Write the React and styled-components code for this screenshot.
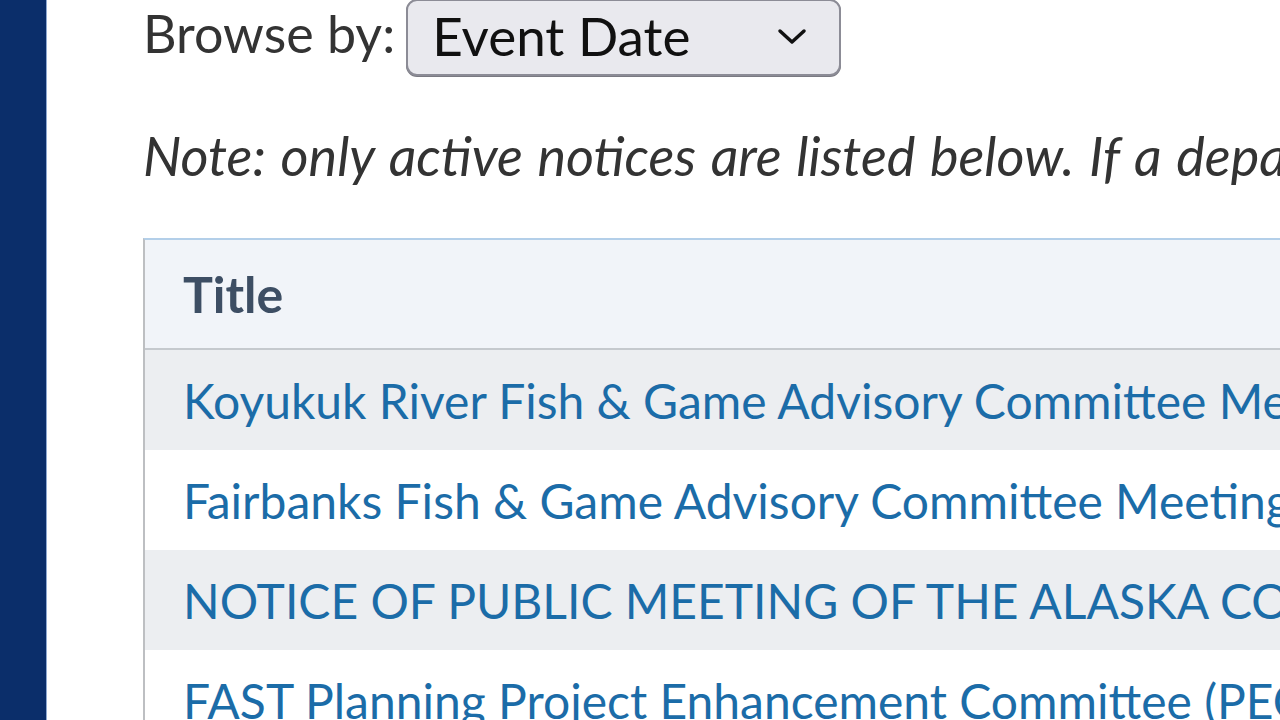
import React from "react";
import styled, { createGlobalStyle } from "styled-components";

const Global = createGlobalStyle`
  html, body { margin: 0; padding: 0; background: #ffffff; }
  body { font-family: Lato, "Open Sans", sans-serif; overflow: hidden; }
  #root { height: 720px; }
`;

const Page = styled.div`
  display: flex;
  width: 1280px;
  height: 720px;
  overflow: hidden;
  background: #fff;
`;

const SideBar = styled.div`
  flex: 0 0 46px;
  height: 100%;
  background: #0b2e6a;
  border-right: 1px solid #8fa9d2;
`;

const Main = styled.main`
  flex: 1;
  min-width: 0;
  padding-left: 96px;
  white-space: nowrap;
  overflow: hidden;
`;

const BrowseRow = styled.div`
  display: flex;
  align-items: center;
  gap: 11px;
  height: 76px;
`;

const Label = styled.span`
  font-size: 52px;
  color: #333;
  position: relative;
  top: -5px;
`;

const Select = styled.div`
  box-sizing: border-box;
  width: 435px;
  height: 77px;
  margin-top: -2px;
  display: flex;
  align-items: center;
  justify-content: space-between;
  padding: 0 31px 0 24px;
  border: 2px solid #8c8c96;
  border-radius: 11px;
  background: #e9e9ee;
  box-shadow: 0 1px 0 #7a7a82;
  font-size: 53px;
  color: #111;
`;

const SelectText = styled.span`
  position: relative;
  top: -2px;
`;

const Note = styled.p`
  margin: 52px 0 0;
  font-size: 54px;
  word-spacing: 2px;
  font-style: italic;
  color: #333;
  line-height: 55px;
`;

const Table = styled.div`
  margin-top: 55px;
  border-left: 2px solid #bdbfc2;
  border-top: 2px solid #b3cfe9;
`;

const HeaderRow = styled.div`
  box-sizing: border-box;
  height: 110px;
  display: flex;
  align-items: center;
  padding-left: 38px;
  background: #f1f4f9;
  border-bottom: 2px solid #c5c9ce;
  font-size: 50px;
  font-weight: 700;
  color: #3d4e64;
`;

const Row = styled.div`
  height: 100px;
  display: flex;
  align-items: center;
  padding-left: 38px;
  background: ${(p) => (p.$striped ? "#eceef1" : "#ffffff")};
`;

const Link = styled.a`
  font-size: 48px;
  color: #1b6ca8;
  text-decoration: none;
`;

const Chevron = () => (
  <svg width="32" height="20" viewBox="0 0 32 20" fill="none">
    <path d="M4 4 L16 15 L28 4" stroke="#111" strokeWidth="3.5" strokeLinecap="round" strokeLinejoin="round" />
  </svg>
);

const rows = [
  "Koyukuk River Fish & Game Advisory Committee Meeting",
  "Fairbanks Fish & Game Advisory Committee Meeting",
  "NOTICE OF PUBLIC MEETING OF THE ALASKA COMMISSION",
  "FAST Planning Project Enhancement Committee (PEC) Meeting",
];

export default function App() {
  return (
    <>
      <Global />
      <Page>
        <SideBar />
        <Main>
          <BrowseRow>
            <Label>Browse by:</Label>
            <Select>
              <SelectText>Event Date</SelectText>
              <Chevron />
            </Select>
          </BrowseRow>
          <Note>
            Note: only active notices are listed below. If a department has requested that a notice be removed, it will not appear.
          </Note>
          <Table>
            <HeaderRow>Title</HeaderRow>
            {rows.map((t, i) => (
              <Row key={i} $striped={i % 2 === 0}>
                <Link href="#">{t}</Link>
              </Row>
            ))}
          </Table>
        </Main>
      </Page>
    </>
  );
}
